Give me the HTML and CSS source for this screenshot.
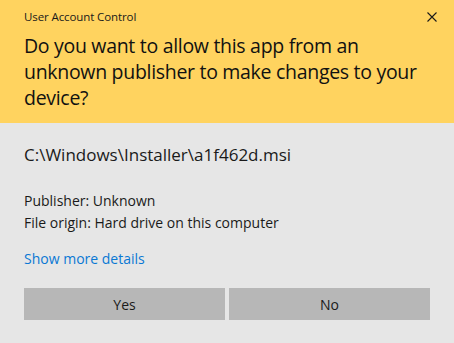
FILE: index.html
```html
<!DOCTYPE html>
<html lang="en">
<head>
    <meta charset="UTF-8">
    <title>User Account Control</title>
    <link rel="stylesheet" href="styles.css">
</head>
<body>
    <div class="uac-dialog">
        <div class="uac-header">
            <div class="uac-titlebar">
                <span class="uac-title">User Account Control</span>
                <svg class="uac-close" width="10" height="10" viewBox="0 0 10 10">
                    <path d="M0.5 0.5 L9.5 9.5 M9.5 0.5 L0.5 9.5" stroke="#1a1a1a" stroke-width="1.1" fill="none"/>
                </svg>
            </div>
            <h1 class="uac-question">Do you want to allow this app from an unknown publisher to make changes to your device?</h1>
        </div>

        <div class="uac-body">
            <div class="uac-program">C:\Windows\Installer\a1f462d.msi</div>
            <div class="uac-meta">
                <div>Publisher: Unknown</div>
                <div>File origin: Hard drive on this computer</div>
            </div>
            <a class="uac-details" href="#">Show more details</a>
            <div class="uac-buttons">
                <button class="uac-button">Yes</button>
                <button class="uac-button">No</button>
            </div>
        </div>
    </div>
</body>
</html>
```

FILE: styles.css
```css
html, body {
    margin: 0;
    padding: 0;
}

body {
    font-family: "Open Sans", "Noto Sans", sans-serif;
    background: #e6e6e6;
    color: #1a1a1a;
}

.uac-dialog {
    width: 454px;
    height: 343px;
    display: flex;
    flex-direction: column;
}

.uac-header {
    background: #ffd35f;
    height: 123px;
    box-sizing: border-box;
    padding: 6px 17px 0 24px;
}

.uac-titlebar {
    display: flex;
    justify-content: space-between;
    align-items: center;
    height: 20px;
}

.uac-title {
    font-size: 11.5px;
    letter-spacing: -0.1px;
}

.uac-close {
    display: block;
    margin-top: 2px;
}

.uac-question {
    margin: 7px 0 0 0;
    font-size: 19.5px;
    font-weight: normal;
    line-height: 26px;
    letter-spacing: -0.3px;
    color: #111;
}

.uac-body {
    flex: 1;
    padding: 21px 24px 0 24px;
}

.uac-program {
    font-size: 17px;
    line-height: 22px;
}

.uac-meta {
    margin-top: 24px;
    font-size: 14px;
    line-height: 22px;
}

.uac-details {
    display: block;
    margin-top: 14px;
    font-size: 14px;
    line-height: 22px;
    color: #0a78d4;
    text-decoration: none;
}

.uac-buttons {
    display: flex;
    gap: 4px;
    margin-top: 18px;
}

.uac-button {
    flex: 1;
    height: 32px;
    border: none;
    background: #b7b7b7;
    font-family: inherit;
    font-size: 14px;
    color: #1a1a1a;
    padding: 0;
}
```
